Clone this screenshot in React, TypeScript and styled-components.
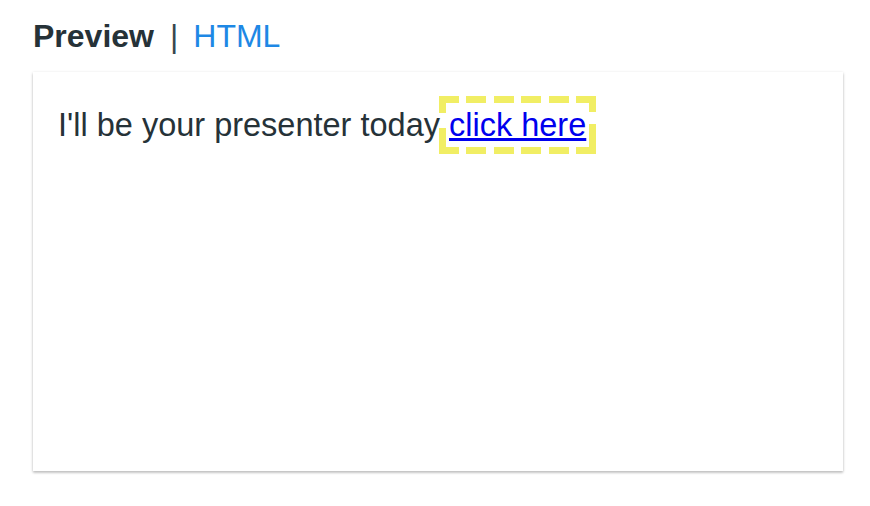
import styled, { createGlobalStyle } from "styled-components";

const GlobalStyle = createGlobalStyle`
  html, body {
    margin: 0;
    padding: 0;
    background: #ffffff;
  }
  body {
    font-family: "Liberation Sans", Arial, Helvetica, sans-serif;
    color: #263238;
  }
`;

const Page = styled.div`
  padding: 18px 0 30px 33px;
`;

const Tabs = styled.div`
  display: flex;
  align-items: baseline;
  font-size: 32px;
  height: 54px;
`;

const Tab = styled.span<{ $active?: boolean }>`
  font-weight: ${(p) => (p.$active ? 700 : 400)};
  color: ${(p) => (p.$active ? "#263238" : "#1e88e5")};
  cursor: ${(p) => (p.$active ? "default" : "pointer")};
`;

const Divider = styled.span`
  margin: 0 15px 0 16px;
  color: #37474f;
  font-weight: 400;
`;

const Card = styled.div`
  width: 810px;
  height: 399px;
  box-sizing: border-box;
  padding: 35px 25px;
  background: #ffffff;
  box-shadow: 0 1px 3px rgba(0, 0, 0, 0.2), 0 2px 2px rgba(0, 0, 0, 0.12);
  font-size: 32.5px;
  color: #263238;
`;

const YELLOW = "#f1ee64";

// dashed focus ring drawn with gradients so the dash lengths match
const Link = styled.a`
  position: relative;
  color: #0000ee;
  text-decoration: underline;
  outline: none;

  &::after {
    content: "";
    position: absolute;
    inset: -11px -10px;
    pointer-events: none;
    background:
      repeating-linear-gradient(90deg, ${YELLOW} 0 20px, transparent 20px 27.4px) top left / 100% 7px no-repeat,
      repeating-linear-gradient(90deg, ${YELLOW} 0 20px, transparent 20px 27.4px) bottom left / 100% 7px no-repeat,
      linear-gradient(180deg, ${YELLOW} 0 17px, transparent 17px 32px, ${YELLOW} 32px) top left / 7px 100% no-repeat,
      linear-gradient(180deg, ${YELLOW} 0 16px, transparent 16px 28px, ${YELLOW} 28px) top right / 7px 100% no-repeat;
  }
`;

export default function App() {
  return (
    <>
      <GlobalStyle />
      <Page>
        <Tabs>
          <Tab $active>Preview</Tab>
          <Divider>|</Divider>
          <Tab>HTML</Tab>
        </Tabs>
        <Card>
          I'll be your presenter today <Link href="#">click here</Link>
        </Card>
      </Page>
    </>
  );
}
